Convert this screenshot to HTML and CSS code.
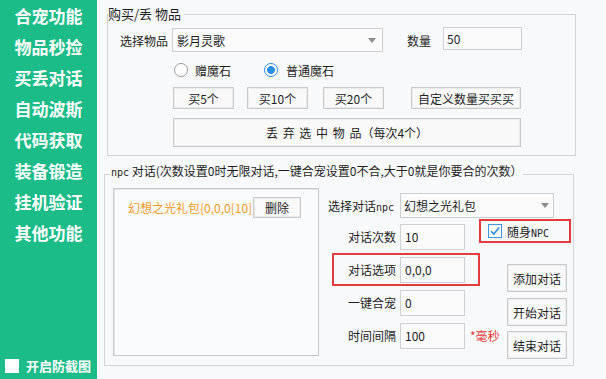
FILE: index.html
```html
<!DOCTYPE html>
<html lang="zh-CN">
<head>
<meta charset="utf-8">
<title>工具</title>
<link rel="stylesheet" href="styles.css">
</head>
<body>
<div class="app">
  <nav class="side">
    <div class="nav-item">合宠功能</div>
    <div class="nav-item">物品秒捡</div>
    <div class="nav-item">买丢对话</div>
    <div class="nav-item">自动波斯</div>
    <div class="nav-item">代码获取</div>
    <div class="nav-item">装备锻造</div>
    <div class="nav-item">挂机验证</div>
    <div class="nav-item">其他功能</div>
    <label class="side-check"><span class="side-box"></span>开启防截图</label>
  </nav>
  <main class="main">
    <section class="group group-buy">
      <div class="group-title"><span>购买/丢 物品</span></div>
      <div class="row row-item">
        <span class="lbl lbl-item">选择物品</span>
        <div class="select sel-item"><span>影月灵歌</span><i class="arrow"></i></div>
        <span class="lbl lbl-qty">数量</span>
        <div class="input inp-qty">50</div>
      </div>
      <div class="row row-radio">
        <span class="radio"></span><span class="rtext rtext-1">赠魔石</span>
        <span class="radio on"></span><span class="rtext rtext-2">普通魔石</span>
      </div>
      <div class="row row-btns">
        <button class="btn b-small">买5个</button>
        <button class="btn b-small b-2">买10个</button>
        <button class="btn b-small b-3">买20个</button>
        <button class="btn b-custom">自定义数量买买买</button>
      </div>
      <div class="row row-drop">
        <button class="btn b-drop">丢 弃 选 中 物 品（每次4个）</button>
      </div>
    </section>

    <section class="group group-npc">
      <div class="group-title"><span><b class="mono">npc</b> 对话(次数设置0时无限对话,一键合宠设置0不合,大于0就是你要合的次数）</span></div>
      <div class="npc-body">
        <div class="listbox">
          <div class="list-item">
            <span class="item-text">幻想之光礼包{0,0,0[10]}</span>
            <button class="btn b-del">删除</button>
          </div>
        </div>
        <div class="npc-right">
          <div class="row row-npc">
            <span class="lbl lbl-npc">选择对话<b class="mono">npc</b></span>
            <div class="select sel-npc"><span>幻想之光礼包</span><i class="arrow"></i></div>
          </div>
          <div class="npc-cols">
            <div class="form-col">
              <div class="form-row"><span class="flbl">对话次数</span><div class="input finp">10</div></div>
              <div class="form-row hl"><span class="flbl">对话选项</span><div class="input finp">0,0,0</div></div>
              <div class="form-row"><span class="flbl">一键合宠</span><div class="input finp">0</div></div>
              <div class="form-row"><span class="flbl">时间间隔</span><div class="input finp">100</div><span class="ms">*毫秒</span></div>
            </div>
            <div class="act-col">
              <div class="npc-check">
                <span class="cbox"><svg width="12" height="12" viewBox="0 0 12 12"><path d="M2 6.2 L4.8 9 L10.2 2.6" fill="none" stroke="#2b8be0" stroke-width="1.6"/></svg></span>
                <span>随身<b class="mono mono-up">NPC</b></span>
              </div>
              <button class="btn b-act b-add">添加对话</button>
              <button class="btn b-act b-start">开始对话</button>
              <button class="btn b-act b-end">结束对话</button>
            </div>
          </div>
        </div>
      </div>
    </section>
  </main>
</div>
</body>
</html>
```

FILE: styles.css
```css
html, body {
  margin: 0;
  padding: 0;
}
body {
  width: 606px;
  height: 379px;
  overflow: hidden;
  font-family: "Noto Sans CJK SC", "Noto Sans", sans-serif;
  font-size: 12px;
  color: #1e1e1e;
}
.app {
  display: flex;
  height: 379px;
}

/* sidebar */
.side {
  width: 97px;
  flex: none;
  background: #1bbc88;
  color: #fff;
  display: flex;
  flex-direction: column;
}
.nav-item {
  height: 31px;
  line-height: 31px;
  text-align: center;
  font-size: 17px;
  font-weight: 700;
}
.side-check {
  margin-top: auto;
  display: flex;
  align-items: center;
  gap: 7px;
  padding: 0 0 6px 5px;
  font-size: 13px;
  font-weight: 700;
  line-height: 14px;
}
.side-box {
  width: 14px;
  height: 14px;
  background: #fff;
}

/* main */
.main {
  flex: 1;
  background: #f8f9fa;
}
.group {
  box-sizing: border-box;
  border: 1px solid #d3d4d6;
}
.group-title {
  display: flex;
  height: 14px;
  line-height: 14px;
}
.group-title span {
  background: #f8f9fa;
  white-space: nowrap;
}
.mono {
  font-family: "DejaVu Sans Mono", "Liberation Mono", monospace;
  font-weight: 400;
  font-size: 10px;
}
.group-buy {
  margin: 14px 0 0 10px;
  width: 469px;
  height: 142px;
}
.group-buy .group-title {
  margin-top: -8px;
}
.group-buy .group-title span {
  font-size: 13px;
  padding-right: 3px;
}

.row {
  display: flex;
  align-items: center;
}
.row-item {
  margin-top: 7px;
  padding-left: 12px;
}
.lbl-item {
  width: 52px;
}
.select {
  box-sizing: border-box;
  display: flex;
  align-items: center;
  justify-content: space-between;
  border: 1px solid #cdcecf;
  background: #fbfbfc;
}
.arrow {
  width: 0;
  height: 0;
  border-left: 4px solid transparent;
  border-right: 4px solid transparent;
  border-top: 5px solid #8c8c8c;
}
.sel-item {
  width: 211px;
  height: 24px;
  padding: 0 6px 0 4px;
}
.lbl-qty {
  margin-left: 24px;
  width: 36px;
}
.input {
  box-sizing: border-box;
  border: 1px solid #cfd0d1;
  background: #fafafa;
  display: flex;
  align-items: center;
  padding-left: 3px;
}
.inp-qty {
  width: 79px;
  height: 23px;
  margin-top: -3px;
}

.row-radio {
  margin-top: 11px;
  padding-left: 66px;
  height: 14px;
}
.radio {
  box-sizing: border-box;
  width: 14px;
  height: 14px;
  border-radius: 50%;
  border: 1px solid #9a9a9a;
  background: #fff;
  flex: none;
}
.radio.on {
  border: 1px solid #2a8ee6;
  background: radial-gradient(circle, #2a8ee6 0 3.6px, #fff 4.2px);
}
.rtext-1 {
  margin-left: 7px;
  margin-right: 33px;
}
.rtext-2 {
  margin-left: 8px;
}

.btn {
  box-sizing: border-box;
  border: 1px solid #c9cacb;
  box-shadow: inset 0 0 0 1px #ececec;
  background: #f9f9f9;
  font-family: "Noto Sans CJK SC", "Noto Sans", sans-serif;
  font-size: 12px;
  color: #1e1e1e;
  padding: 0;
  margin: 0;
  display: flex;
  align-items: center;
  justify-content: center;
}
.row-btns {
  margin-top: 10px;
  padding-left: 65px;
}
.b-small {
  width: 61px;
  height: 22px;
}
.b-2 {
  margin-left: 13px;
}
.b-3 {
  margin-left: 15px;
}
.b-custom {
  margin-left: 27px;
  width: 110px;
  height: 22px;
}
.row-drop {
  margin-top: 9px;
  padding-left: 65px;
}
.b-drop {
  width: 348px;
  height: 29px;
  white-space: pre;
  word-spacing: 2px;
}

/* npc group */
.group-npc {
  margin: 18px 0 0 7px;
  width: 470px;
  height: 192px;
}
.group-npc .group-title {
  margin-top: -11px;
  padding-left: 5px;
}
.group-npc .group-title span {
  padding: 0 1px;
}
.npc-body {
  display: flex;
  padding: 10px 0 0 8px;
}
.listbox {
  box-sizing: border-box;
  width: 206px;
  height: 168px;
  border: 1px solid #c8c9ca;
  box-shadow: inset 1px 1px 0 #e4e5e6;
  background: #fafbfc;
  flex: none;
}
.list-item {
  display: flex;
  align-items: center;
  margin-top: 8px;
  padding-left: 14px;
  height: 21px;
}
.item-text {
  width: 125px;
  flex: none;
  white-space: nowrap;
  color: #f39a1e;
}
.b-del {
  width: 48px;
  height: 21px;
  background: rgba(249, 249, 249, 0.55);
}

.npc-right {
  margin: 5px 0 0 9px;
}
.row-npc {
  height: 25px;
}
.lbl-npc {
  width: 72px;
  white-space: nowrap;
}
.sel-npc {
  width: 154px;
  height: 25px;
  padding: 0 4px 0 3px;
}
.npc-cols {
  display: flex;
}
.form-col {
  width: 147px;
  margin: 2px 0 0 4px;
  flex: none;
}
.form-row {
  box-sizing: border-box;
  width: 148px;
  height: 33px;
  border: 2px solid transparent;
  display: flex;
  align-items: center;
  white-space: nowrap;
}
.form-row.hl {
  border-color: #e23b3b;
}
.flbl {
  width: 62px;
  margin-right: 4px;
  text-align: right;
  flex: none;
}
.finp {
  width: 65px;
  height: 26px;
  padding-left: 4px;
  flex: none;
}
.ms {
  margin-left: 5px;
  color: #e53935;
}
.act-col {
  width: 92px;
  margin-top: 1px;
  flex: none;
}
.npc-check {
  box-sizing: border-box;
  width: 92px;
  height: 24px;
  border: 2px solid #e23b3b;
  display: flex;
  align-items: center;
  padding-left: 7px;
  white-space: nowrap;
}
.cbox {
  box-sizing: border-box;
  width: 14px;
  height: 14px;
  border: 1px solid #3a96e6;
  background: #fff;
  margin-right: 5px;
  display: flex;
  align-items: center;
  justify-content: center;
}
.mono-up {
  font-size: 10px;
}
.b-act {
  width: 60px;
  height: 28px;
  margin-left: 28px;
}
.b-add {
  margin-top: 21px;
}
.b-start {
  margin-top: 6px;
}
.b-end {
  margin-top: 5px;
}
```
